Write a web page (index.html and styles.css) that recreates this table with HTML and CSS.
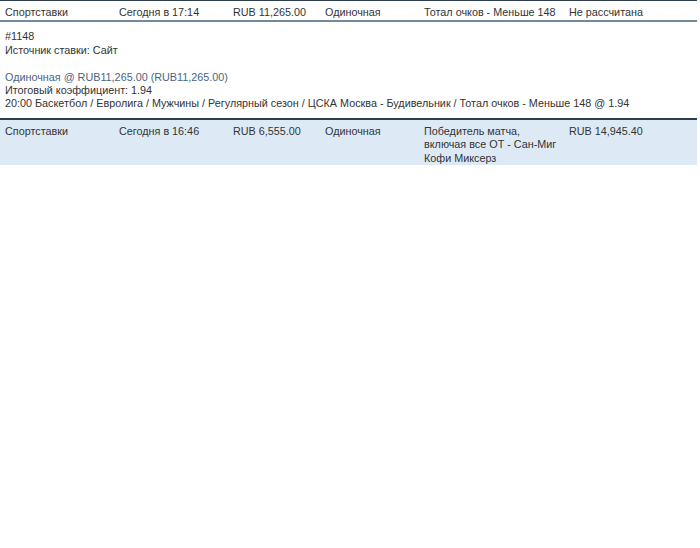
FILE: index.html
```html
<!DOCTYPE html>
<html lang="ru">
<head>
  <meta charset="UTF-8" />
  <title>История ставок</title>
  <link rel="stylesheet" href="styles.css">
</head>
<body>

<div class="bets">
  <div class="bet-row head">
    <div class="cell c1">Спортставки</div>
    <div class="cell c2">Сегодня в 17:14</div>
    <div class="cell c3">RUB 11,265.00</div>
    <div class="cell c4">Одиночная</div>
    <div class="cell c5">Тотал очков - Меньше 148</div>
    <div class="cell c6">Не рассчитана</div>
  </div>

  <!-- expanded details of the first bet -->
  <div class="bet-details">
    <div>#1148</div>
    <div>Источник ставки: Сайт</div>
    <div class="gap"></div>
    <div class="bet-type">Одиночная @ RUB11,265.00 (RUB11,265.00)</div>
    <div>Итоговый коэффициент: 1.94</div>
    <div>20:00 Баскетбол / Евролига / Мужчины / Регулярный сезон / ЦСКА Москва - Будивельник / Тотал очков - Меньше 148 @ 1.94</div>
  </div>

  <div class="bet-row alt">
    <div class="cell c1">Спортставки</div>
    <div class="cell c2">Сегодня в 16:46</div>
    <div class="cell c3">RUB 6,555.00</div>
    <div class="cell c4">Одиночная</div>
    <div class="cell c5">Победитель матча, включая все ОТ - Сан-Миг Кофи Миксерз</div>
    <div class="cell c6">RUB 14,945.40</div>
  </div>
</div>

</body>
</html>
```

FILE: styles.css
```css
:root {
  --text:#333; --dark:#2d3e4e; --line:#73889a; --alt:#ddeaf6; --type:#4a6480;
}
body{margin:0;background:#fff;color:var(--text);
     font-family:"Liberation Sans",Arial,sans-serif;font-size:10.8px;line-height:13.4px}
.bets{width:697px}
.bet-row{display:flex;border-top:1px solid var(--dark)}
.bet-row.head{padding:5px 0 1px;border-bottom:2px solid var(--line)}
.bet-row.alt{background:var(--alt);padding:5px 0 0;border-top:2px solid var(--dark)}
.cell{padding:0 5px;box-sizing:border-box}
.c1,.c2{width:114px}
.c3{width:92px}
.c4{width:99px}
.c5{width:145px}
.c6{flex:1}
.bet-details{padding:8px 5px 7px}
.bet-details .gap{height:13.4px}
.bet-type{color:var(--type)}
```
